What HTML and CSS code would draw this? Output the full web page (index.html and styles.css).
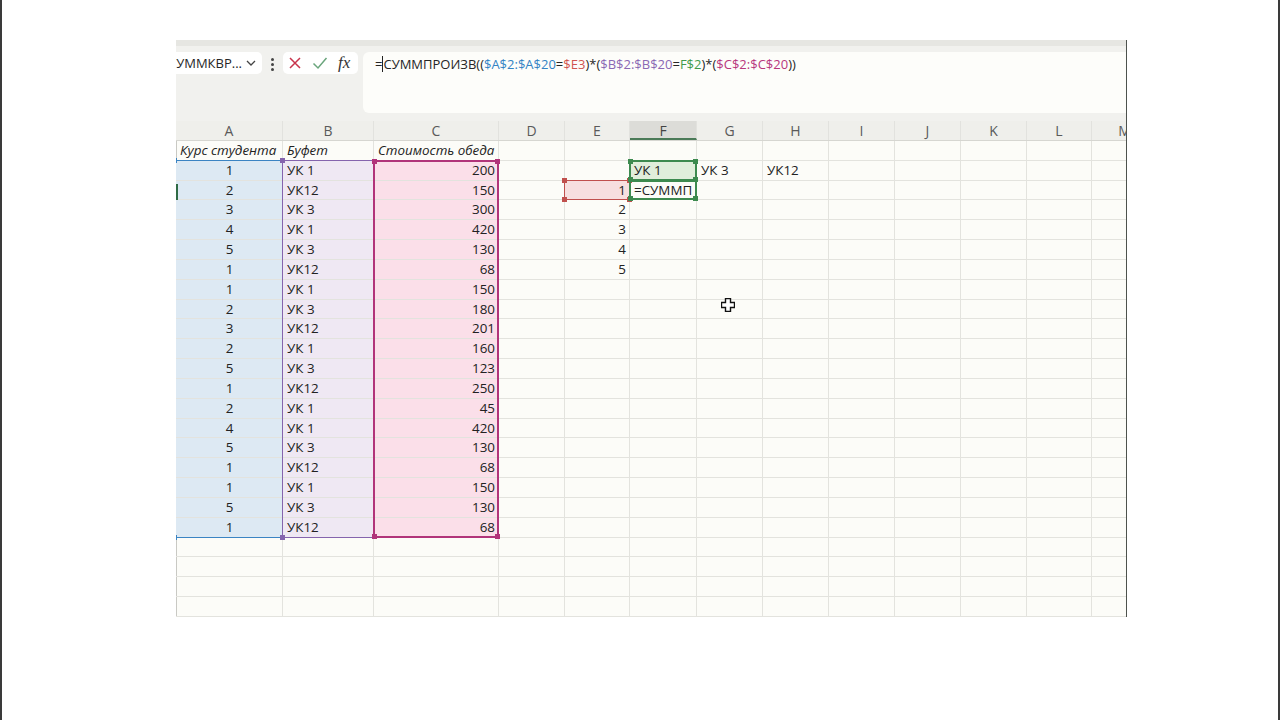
FILE: index.html
```html
<!DOCTYPE html>
<html lang="ru">
<head>
    <meta charset="UTF-8">
    <title>Книга1 - Excel</title>
    <link rel="stylesheet" href="styles.css">
</head>
<body>
    <div class="excel">
        <div class="top-strip"></div>

        <div class="toolbar">
            <div class="name-box">
                <span class="name-text">СУММКВР...</span>
                <svg class="chevron" viewBox="0 0 10 6"><path d="M1 1l4 4 4-4"/></svg>
            </div>
            <div class="grip"><i></i><i></i><i></i></div>
            <div class="fx-buttons">
                <svg class="btn-cancel" viewBox="0 0 14 14"><path d="M2 2l10 10M12 2L2 12"/></svg>
                <svg class="btn-enter" viewBox="0 0 16 14"><path d="M1.5 7.5l4.5 4.5L14.5 2"/></svg>
                <span class="btn-fx">fx</span>
            </div>
            <div class="formula">=<span class="caret"></span>СУММПРОИЗВ((<span class="ref-a">$A$2:$A$20</span>=<span class="ref-e">$E3</span>)*(<span class="ref-b">$B$2:$B$20</span>=<span class="ref-f">F$2</span>)*(<span class="ref-c">$C$2:$C$20</span>))</div>
        </div>

        <div class="col-heads">
            <div class="col-head">A</div>
            <div class="col-head">B</div>
            <div class="col-head">C</div>
            <div class="col-head">D</div>
            <div class="col-head">E</div>
            <div class="col-head active">F</div>
            <div class="col-head">G</div>
            <div class="col-head">H</div>
            <div class="col-head">I</div>
            <div class="col-head">J</div>
            <div class="col-head">K</div>
            <div class="col-head">L</div>
            <div class="col-head">M</div>
        </div>

        <div class="sheet" id="sheet">
            <!-- range outlines of the formula being edited -->
            <div class="range range-a"><i class="h tl"></i><i class="h bl"></i></div>
            <div class="range range-b"><i class="h tl"></i><i class="h bl"></i></div>
            <div class="range range-c"><i class="h tl"></i><i class="h tr"></i><i class="h bl"></i><i class="h br"></i></div>
            <div class="range range-e"><i class="h tl"></i><i class="h tr"></i><i class="h bl"></i><i class="h br"></i></div>
            <div class="range range-f"><i class="h tl"></i><i class="h tr"></i><i class="h bl"></i><i class="h br"></i></div>
            <div class="range active-cell"><i class="h bl"></i><i class="h br"></i></div>
            <div class="row-mark"></div>
            <svg class="pointer" viewBox="0 0 14 14">
                <path d="M4.5 0.5h5v4h4v5h-4v4h-5v-4h-4v-5h4z"/>
            </svg>
        </div>
    </div>

    <script>
        // Sheet data
        const course = [1, 2, 3, 4, 5, 1, 1, 2, 3, 2, 5, 1, 2, 4, 5, 1, 1, 5, 1];
        const buffet = ['УК 1', 'УК12', 'УК 3', 'УК 1', 'УК 3', 'УК12', 'УК 1', 'УК 3', 'УК12', 'УК 1',
                        'УК 3', 'УК12', 'УК 1', 'УК 1', 'УК 3', 'УК12', 'УК 1', 'УК 3', 'УК12'];
        const price = [200, 150, 300, 420, 130, 68, 150, 180, 201, 160, 123, 250, 45, 420, 130, 68, 150, 130, 68];

        const ROWS = 24;
        const COLS = 13;

        function cellFor(row, col) {
            if (row === 1) {
                const heads = ['Курс студента', 'Буфет', 'Стоимость обеда'];
                if (col < 3) return { text: heads[col], cls: 'italic' };
            }
            if (row >= 2 && row <= 20) {
                const i = row - 2;
                if (col === 0) return { text: course[i], cls: 'center fill-a' };
                if (col === 1) return { text: buffet[i], cls: 'fill-b' };
                if (col === 2) return { text: price[i], cls: 'num fill-c' };
            }
            if (row === 2) {
                if (col === 5) return { text: 'УК 1', cls: 'fill-f' };
                if (col === 6) return { text: 'УК 3', cls: '' };
                if (col === 7) return { text: 'УК12', cls: '' };
            }
            if (row === 3) {
                if (col === 4) return { text: 1, cls: 'num fill-e' };
                if (col === 5) return { text: '=СУММП', cls: '' };
            }
            if (row >= 4 && row <= 7 && col === 4) {
                return { text: row - 2, cls: 'num' };
            }
            return { text: '', cls: '' };
        }

        const sheet = document.getElementById('sheet');
        const frag = document.createDocumentFragment();
        for (let r = 1; r <= ROWS; r++) {
            for (let c = 0; c < COLS; c++) {
                const data = cellFor(r, c);
                const el = document.createElement('div');
                el.className = ('cell ' + data.cls).trim();
                el.textContent = data.text;
                frag.appendChild(el);
            }
        }
        sheet.prepend(frag);
    </script>
</body>
</html>
```

FILE: styles.css
```css
* {
    margin: 0;
    padding: 0;
    box-sizing: border-box;
}

body {
    font-family: 'Open Sans', 'Noto Sans', sans-serif;
    background: #fff;
    height: 720px;
    overflow: hidden;
    border-left: 2px solid #3a3a3a;
    border-right: 2px solid #3a3a3a;
    color: #222;
}

.excel {
    width: 951px;
    margin-left: 174px;
    margin-top: 40px;
    background: #fcfcf8;
    border-right: 1.5px solid #4d524d;
    overflow: hidden;
}

.top-strip {
    height: 6px;
    background: #e6e6e2;
}

/* formula bar */
.toolbar {
    display: flex;
    align-items: flex-start;
    height: 75px;
    padding-top: 6px;
    background: #f1f1ee;
}

.name-box {
    width: 86px;
    height: 22px;
    background: #fff;
    border-radius: 0 5px 5px 0;
    display: flex;
    align-items: center;
    overflow: hidden;
    font-size: 13px;
    color: #262626;
}

.name-text {
    flex: 1;
    white-space: nowrap;
    overflow: hidden;
    text-indent: -8px;
}

.chevron {
    width: 10px;
    height: 6px;
    margin: 0 6px 0 2px;
    fill: none;
    stroke: #444;
    stroke-width: 1.3;
}

.grip {
    width: 21px;
    display: flex;
    flex-direction: column;
    align-items: center;
    gap: 2px;
    padding-top: 6px;
}

.grip i {
    width: 3px;
    height: 3px;
    border-radius: 50%;
    background: #444;
}

.fx-buttons {
    width: 75px;
    height: 22px;
    background: #fff;
    border-radius: 5px;
    display: flex;
    align-items: center;
    padding-left: 5px;
    gap: 10px;
}

.btn-cancel {
    width: 14px;
    height: 14px;
    fill: none;
    stroke: #c8334b;
    stroke-width: 1.5;
}

.btn-enter {
    width: 16px;
    height: 14px;
    fill: none;
    stroke: #6aa57c;
    stroke-width: 1.5;
}

.btn-fx {
    font-family: 'Liberation Serif', serif;
    font-style: italic;
    font-size: 17px;
    color: #333;
    line-height: 20px;
}

.formula {
    flex: 1;
    margin-left: 5px;
    height: 61px;
    background: #fdfdfa;
    border-radius: 6px 0 0 6px;
    padding: 2px 12px;
    font-size: 13px;
    line-height: 20px;
    color: #262626;
    white-space: nowrap;
}

.caret {
    display: inline-block;
    width: 1px;
    height: 16px;
    background: #222;
    vertical-align: -3px;
}

.ref-a { color: #3383c4; }
.ref-e { color: #d0544f; }
.ref-b { color: #8a68b4; }
.ref-f { color: #3f9a4b; }
.ref-c { color: #b8367d; }

/* column headers */
.col-heads,
.sheet {
    display: grid;
    grid-template-columns: 107px 91px 125px 66px 65px 67px 66px 66px 66px 66px 66px 65px 66px;
}

.col-heads {
    height: 20px;
    background: #efefeb;
    border-bottom: 1px solid #d6d6d1;
}

.col-head {
    text-align: center;
    font-size: 14px;
    line-height: 19px;
    color: #5a5a5a;
    border-right: 1px solid #e2e2de;
    overflow: hidden;
}

.col-head.active {
    background: #dcdcd8;
    border-bottom: 2px solid #4b7a58;
    color: #444;
}

/* grid */
.sheet {
    grid-auto-rows: 19.83px;
    position: relative;
    box-shadow: inset 1px 0 0 #c9c9c4;
}

.cell {
    border-right: 1px solid #e3e3de;
    border-bottom: 1px solid #e3e3de;
    font-size: 13.4px;
    line-height: 19px;
    padding: 0 3px 0 4px;
    white-space: nowrap;
    color: #222;
}

.cell.italic { font-style: italic; }
.cell.center { text-align: center; }
.cell.num { text-align: right; }

.fill-a { background: #dde9f3; }
.fill-b { background: #efe8f3; }
.fill-c { background: #fbdfe9; }
.fill-e { background: #f7dfdf; }
.fill-f { background: #e0eedb; }

.range {
    position: absolute;
    inset: -1px 0 0 -1px;
    pointer-events: none;
}

.range-a {
    grid-column: 1 / 2;
    grid-row: 2 / 21;
    color: #3b84c3;
    border: 1.5px solid #3b84c3;
    border-left: none;
}

.range-b {
    grid-column: 2 / 3;
    grid-row: 2 / 21;
    color: #8564ad;
    border: 1.5px solid #8564ad;
}

.range-c {
    grid-column: 3 / 4;
    grid-row: 2 / 21;
    color: #b1347a;
    border: 2px solid #b1347a;
}

.range-e {
    grid-column: 5 / 6;
    grid-row: 3 / 4;
    color: #c0504d;
    border: 1.5px solid #c0504d;
}

.range-f {
    grid-column: 6 / 7;
    grid-row: 2 / 3;
    color: #3d8a4f;
    border: 2px solid #3d8a4f;
}

.active-cell {
    grid-column: 6 / 7;
    grid-row: 3 / 4;
    color: #3d8a4f;
    border: 2px solid #3d8a4f;
}

.h {
    position: absolute;
    width: 5px;
    height: 5px;
    background: currentColor;
}

.h.tl { top: -3px; left: -3px; }
.h.tr { top: -3px; right: -3px; }
.h.bl { bottom: -3px; left: -3px; }
.h.br { bottom: -3px; right: -3px; }

.row-mark {
    position: absolute;
    grid-column: 1 / 2;
    grid-row: 3 / 4;
    top: 3px;
    bottom: 0;
    left: 0;
    width: 2px;
    background: #2f6b45;
}

.pointer {
    position: absolute;
    grid-column: 7 / 8;
    grid-row: 9 / 10;
    left: 24px;
    top: -2px;
    width: 14px;
    height: 14px;
    fill: #fff;
    stroke: #111;
    stroke-width: 1.4;
}
```
